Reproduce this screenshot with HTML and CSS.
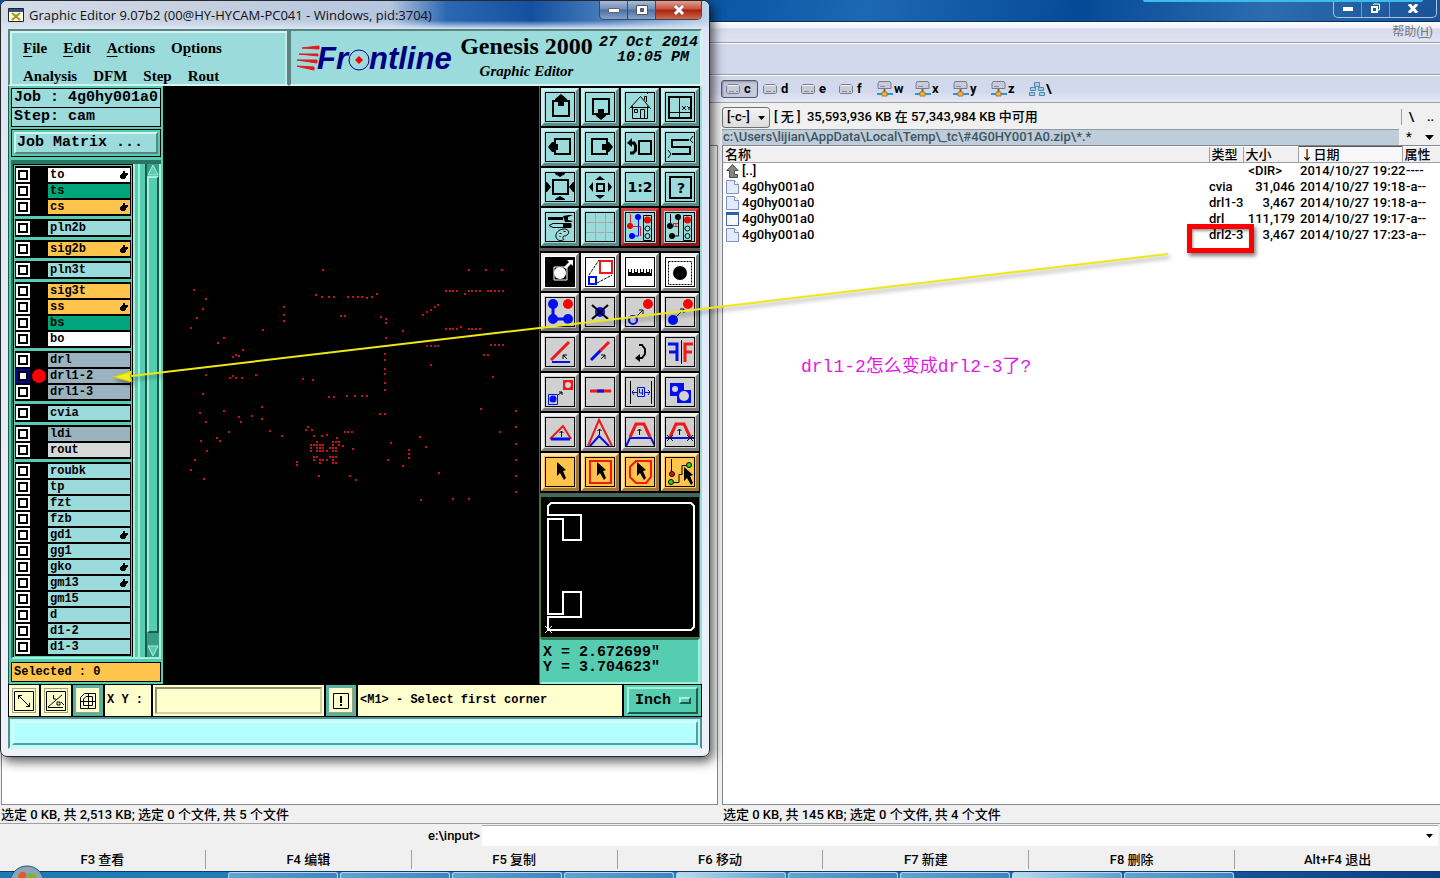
FILE: index.html
```html
<!DOCTYPE html>
<html lang="zh-CN">
<head>
  <meta charset="UTF-8" />
  <title>Graphic Editor</title>
  <link rel="stylesheet" href="styles.css">
</head>
<body>

  <!-- Shared icon shapes -->
  <svg class="defs" aria-hidden="true">
    <symbol id="hand" viewBox="0 0 9 8"><path d="M4 0h2v2h3v2H8v1H7v2H6v1H2V7H1V4h1V3h1V2h1z"/></symbol>
    <symbol id="cursor" viewBox="0 0 12 19"><path d="M1 0l9 8-3 1 3 7-2 2-4-7-3 3z"/></symbol>
    <symbol id="disk" viewBox="0 0 14 10"><path d="M2 .5h10l1.500 2v6l-1 1H1.500l-1-1v-6z" fill="#c9ccd6" stroke="#777c8c"/><path d="M1.500 1.500h11" stroke="#f5f6fa"/><path d="M3 7.500h5" stroke="#888c98"/><path d="M10 7.500h2" stroke="#3fae50"/></symbol>
    <symbol id="net" viewBox="0 0 16 16"><path d="M2 .5h11l1 2v5H1v-5z" fill="#c9ccd6" stroke="#777c8c"/><path d="M3 5.500h5" stroke="#888c98"/><path d="M7.500 8v4" stroke="#666" stroke-width="2"/><path d="M0 13h16" stroke="#2d94d8" stroke-width="2"/><path d="M5 11h5v4H5z" fill="#f0b840" stroke="#b47d18"/></symbol>
    <symbol id="page" viewBox="0 0 13 14"><path d="M.5.500h8l4 4v9H.5z" fill="#e4ebfc" stroke="#7f90c8"/><path d="M8.500.500v4h4" fill="#fff" stroke="#7f90c8"/></symbol>
  </svg>

  <!-- File manager -->
  <main class="commander">
    <header class="cmd-title">
      <div class="caption-buttons">
        <button aria-label="Minimize"><svg width="10" height="4"><path d="M0 0h10v4H0z" fill="#fff"/></svg></button>
        <button aria-label="Restore"><svg width="11" height="11"><path d="M3.500 2V1h6v6H8" fill="none" stroke="#fff"/><path d="M2 4h5v5H2z" fill="none" stroke="#fff" stroke-width="2"/></svg></button>
        <button class="wide" aria-label="Close"><svg width="10" height="9"><path d="M1 0l8 9M9 0L1 9" stroke="#fff" stroke-width="3"/></svg></button>
      </div>
    </header>
    <nav class="cmd-menu"><a href="#">帮助(<u>H</u>)</a></nav>
    <div class="cmd-toolbar"></div>
    <div class="drives">
      <button class="on"><svg width="14" height="10"><use href="#disk"/></svg>c</button>
      <button><svg width="14" height="10"><use href="#disk"/></svg>d</button>
      <button><svg width="14" height="10"><use href="#disk"/></svg>e</button>
      <button><svg width="14" height="10"><use href="#disk"/></svg>f</button>
      <button><svg width="16" height="16"><use href="#net"/></svg>w</button>
      <button><svg width="16" height="16"><use href="#net"/></svg>x</button>
      <button><svg width="16" height="16"><use href="#net"/></svg>y</button>
      <button><svg width="16" height="16"><use href="#net"/></svg>z</button>
      <button><svg width="16" height="16" fill="#a8d0ea" stroke="#5484a8"><path d="M5.500 1.500h5v4h-5zM1.500 6.500h5v3h-5zM9.500 6.500h5v3h-5zM.5 11.500h5v3h-5zM10.500 11.500h5v3h-5z"/></svg>\</button>
    </div>

    <div class="panels">
      <section class="panel">
        <div class="panel-head"></div>
        <div class="path"></div>
        <div class="filebox empty"></div>
        <p class="status">选定 0 KB, 共 2,513 KB; 选定 0 个文件, 共 5 个文件</p>
      </section>
      <section class="panel">
        <div class="panel-head">
          <div class="drive-select"><select aria-label="Drive"><option>[-c-]</option></select><svg width="7" height="4"><path d="M0 0h7L3.500 4z"/></svg></div>
          <span class="free">[ 无 ]&nbsp; 35,593,936 KB 在 57,343,984 KB 中可用</span>
          <span class="updir"><button>\</button><button>..</button></span>
        </div>
        <div class="path">
          <span>c:\Users\lijian\AppData\Local\Temp\_tc\#4G0HY001A0.zip\*.*</span>
          <div class="path-buttons"><button>*</button><button aria-label="History"><svg width="9" height="5"><path d="M0 0h9L4.500 5z"/></svg></button></div>
        </div>
        <div class="filebox">
          <table>
            <thead>
              <tr><th>名称</th><th class="type">类型</th><th class="size">大小</th><th class="date">↓日期</th><th class="attr">属性</th></tr>
            </thead>
            <tbody>
              <tr><td><svg width="13" height="14"><path d="M6.500.500L.8 6.500H3.500v7h8v-3h-3v-4h3.700z" fill="#858585" stroke="#4c4c4c"/></svg>[..]</td><td></td><td class="dir">&lt;DIR&gt;</td><td>2014/10/27 19:22</td><td>----</td></tr>
              <tr><td><svg width="13" height="14"><use href="#page"/></svg>4g0hy001a0</td><td>cvia</td><td>31,046</td><td>2014/10/27 19:18</td><td>-a--</td></tr>
              <tr><td><svg width="13" height="14"><use href="#page"/></svg>4g0hy001a0</td><td>drl1-3</td><td>3,467</td><td>2014/10/27 19:18</td><td>-a--</td></tr>
              <tr><td><svg width="13" height="14"><path d="M.5.500h12v13H.5z" fill="#f4f8ff" stroke="#4468b0"/><path d="M0 0h13v3H0z" fill="#345ca8"/></svg>4g0hy001a0</td><td>drl</td><td>111,179</td><td>2014/10/27 19:17</td><td>-a--</td></tr>
              <tr><td><svg width="13" height="14"><use href="#page"/></svg>4g0hy001a0</td><td class="marked">drl2-3</td><td>3,467</td><td>2014/10/27 17:23</td><td>-a--</td></tr>
            </tbody>
          </table>
        </div>
        <p class="status">选定 0 KB, 共 145 KB; 选定 0 个文件, 共 4 个文件</p>
      </section>
    </div>

    <div class="cmdline">
      <label for="cmd">e:\input&gt;</label>
      <div class="combo"><input id="cmd" type="text"><button aria-label="Commands"><svg width="7" height="4"><path d="M0 0h7L3.500 4z"/></svg></button></div>
    </div>
    <div class="fkeys">
      <button>F3 查看</button><button>F4 编辑</button><button>F5 复制</button><button>F6 移动</button><button>F7 新建</button><button>F8 删除</button><button>Alt+F4 退出</button>
    </div>
    <footer class="taskbar">
      <svg class="orb" width="38" height="13"><circle cx="19" cy="18" r="17" fill="#8aa5b8" stroke="#24527c"/><path d="M10 13c0-6 5-7 8-5v5z" fill="#e45a24"/><path d="M19 8c4 2 7 0 9 1v4h-9z" fill="#7fb42c"/></svg>
      <i></i><i></i><i></i><i></i><i class="lit"></i><i></i><i></i><i class="lit"></i><i></i>
    </footer>
  </main>
  <div class="notch"></div>

  <!-- Genesis window -->
  <section class="genesis">
    <header class="gen-title">
      <svg width="16" height="14"><path d="M.5.500h15v13H.5z" fill="#fffbe8" stroke="#222"/><path d="M1 1h14v3H1z" fill="#334d90"/><path d="M4 5l8 7M12 5l-8 7" stroke="#a09a10" stroke-width="2"/></svg>
      <h1>Graphic Editor 9.07b2 (00@HY-HYCAM-PC041 - Windows, pid:3704)</h1>
      <div class="caption-buttons">
        <button aria-label="Minimize"><svg width="12" height="5"><path d="M.5.500h11v4H.5z" fill="#fff" stroke="#666"/></svg></button>
        <button aria-label="Maximize"><svg width="12" height="10"><path d="M.5.500h11v9H.5z" fill="#fff" stroke="#555"/><path d="M4.500 3.500h3v3h-3z" fill="#4d668c" stroke="#555"/></svg></button>
        <button class="close" aria-label="Close"><svg width="12" height="10"><path d="M2 1l8 8M10 1L2 9" stroke="#555" stroke-width="4"/><path d="M2 1l8 8M10 1L2 9" stroke="#fff" stroke-width="3"/></svg></button>
      </div>
    </header>

    <div class="gen-body">
      <div class="banner">
        <nav class="gen-menu">
          <div><button><u>F</u>ile</button><button><u>E</u>dit</button><button><u>A</u>ctions</button><button>O<u>p</u>tions</button></div>
          <div><button>Analysis</button><button>DFM</button><button>Step</button><button>Rout</button></div>
        </nav>
        <div class="brand">
          <svg class="logo" width="162" height="34">
            <path d="M5 7l17-2v3zM2 13h19v2zM0 19h20v3zM-1 25l18 1v3z" fill="#e81818" stroke="#e81818"/>
            <g fill="#000080" font-family="Liberation Sans, sans-serif" font-weight="bold" font-style="italic" font-size="31"><text x="20" y="28">Fr</text><text x="72" y="28">ntline</text></g>
            <circle cx="62" cy="19" r="10" fill="none" stroke="#000080"/><path d="M62 15l4 4-4 4-4-4z" fill="#f00"/>
          </svg>
          <div class="product"><strong>Genesis 2000</strong><em>Graphic Editor</em></div>
          <time>27 Oct 2014<br>10:05 PM&nbsp;</time>
        </div>
      </div>

      <div class="work">
        <aside class="side">
          <div class="job"><p>Job : 4g0hy001a0</p><p>Step: cam</p></div>
          <div class="matrix"><button>Job Matrix ...</button></div>
          <div class="scroller">
            <div class="layers">
              <div class="group">
                <label class="white"><input type="checkbox"><i></i><span>to<svg><use href="#hand"/></svg></span></label>
                <label class="green"><input type="checkbox"><i></i><span>ts</span></label>
                <label class="amber"><input type="checkbox"><i></i><span>cs<svg><use href="#hand"/></svg></span></label>
              </div>
              <div class="group"><label><input type="checkbox"><i></i><span>pln2b</span></label></div>
              <div class="group"><label class="amber"><input type="checkbox"><i></i><span>sig2b<svg><use href="#hand"/></svg></span></label></div>
              <div class="group"><label><input type="checkbox"><i></i><span>pln3t</span></label></div>
              <div class="group">
                <label class="amber"><input type="checkbox"><i></i><span>sig3t</span></label>
                <label class="amber"><input type="checkbox"><i></i><span>ss<svg><use href="#hand"/></svg></span></label>
                <label class="green"><input type="checkbox"><i></i><span>bs</span></label>
                <label class="white"><input type="checkbox"><i></i><span>bo</span></label>
              </div>
              <div class="group">
                <label class="grey"><input type="checkbox"><i></i><span>drl</span></label>
                <label class="grey"><input type="checkbox" checked><i></i><span>drl1-2</span></label>
                <label class="grey"><input type="checkbox"><i></i><span>drl1-3</span></label>
              </div>
              <div class="group"><label><input type="checkbox"><i></i><span>cvia</span></label></div>
              <div class="group">
                <label class="grey"><input type="checkbox"><i></i><span>ldi</span></label>
                <label class="silver"><input type="checkbox"><i></i><span>rout</span></label>
              </div>
              <div class="group">
                <label><input type="checkbox"><i></i><span>roubk</span></label>
                <label><input type="checkbox"><i></i><span>tp</span></label>
                <label><input type="checkbox"><i></i><span>fzt</span></label>
                <label><input type="checkbox"><i></i><span>fzb</span></label>
                <label><input type="checkbox"><i></i><span>gd1<svg><use href="#hand"/></svg></span></label>
                <label><input type="checkbox"><i></i><span>gg1</span></label>
                <label><input type="checkbox"><i></i><span>gko<svg><use href="#hand"/></svg></span></label>
                <label><input type="checkbox"><i></i><span>gm13<svg><use href="#hand"/></svg></span></label>
                <label><input type="checkbox"><i></i><span>gm15</span></label>
                <label><input type="checkbox"><i></i><span>d</span></label>
                <label><input type="checkbox"><i></i><span>d1-2</span></label>
                <label><input type="checkbox"><i></i><span>d1-3</span></label>
              </div>
            </div>
            <div class="rail"></div>
            <div class="scrollbar">
              <button aria-label="Scroll up"><svg width="12" height="12"><path d="M6 1l5 10H1z" fill="#56cdb0" stroke="#a4f0dc"/></svg></button>
              <div class="thumb"></div>
              <button aria-label="Scroll down"><svg width="12" height="12"><path d="M1 1h10L6 11z" fill="#56cdb0" stroke="#a4f0dc"/></svg></button>
            </div>
          </div>
          <p class="selected">Selected : 0</p>
        </aside>

        <!-- Drill hits of the active layer -->
        <div class="canvas">
          <svg width="376" height="500" viewBox="0 0 376 500">
            <path stroke="#c4141e" stroke-width="2" d="M159 184h2M305 184h2M322 184h2M338 184h2M30 204h2M42 213h2M39 223h2M33 232h2M27 242h2
              M152 209h2M158 211h2M165 211h2M170 211h2M184 211h2M189 211h2M194 211h2M198 211h2M203 212h2M208 211h2M213 208h2
              M282 205h2M286 205h2M289 205h2M293 205h2M301 208h2M305 205h2M308 205h2M312 205h2M316 205h2M324 205h2M327 205h2M331 205h2M335 205h2M339 205h2
              M120 221h2M120 229h2M120 235h2M177 230h2M181 230h2M217 231h2M222 233h2M222 237h2M259 229h2M263 226h2M267 224h2M271 221h2M274 219h2
              M99 244h2M239 245h2M282 243h2M286 243h2M289 243h2M293 243h2M297 241h2M305 243h2M308 243h2M312 243h2M316 243h2
              M60 252h2M54 257h2M222 252h2M79 264h2M69 271h2M72 269h2M75 270h2M263 260h2M267 260h2M271 260h2M274 260h2
              M327 259h2M331 259h2M335 259h2M339 259h2M320 269h2M324 269h2M267 279h2M329 291h2
              M221 268h2M221 274h2M221 283h2M221 288h2M221 297h2M221 304h2
              M42 289h2M66 292h2M69 290h2M72 292h2M78 292h2M92 289h2M139 293h2M149 294h2M39 308h2M165 311h2M170 311h2M183 310h2M191 310h2M198 310h2M203 310h2
              M98 321h2M60 325h2M36 327h2M75 331h2M88 330h2M98 333h2M42 336h2M77 336h2M216 328h2M221 328h2
              M317 323h2M352 325h2M352 341h2M352 358h2M352 374h2M352 390h2M352 406h2M336 346h2
              M65 346h2M53 352h2M37 355h2M56 355h2M43 365h2M31 374h2M27 384h2M40 393h2M106 345h2M118 350h2
              M144 341h2M142 344h2M148 344h2M150 350h2M158 350h2M163 349h2M173 352h2M181 346h2M184 346h2M188 346h2
              M153 356h2M169 356h2M172 356h2M175 356h2M147 359h2M150 359h2M153 359h2M156 359h2M159 359h2M169 359h2M175 359h2M179 360h2
              M147 362h2M153 362h2M156 362h2M159 362h2M166 362h2M169 362h2M172 362h2M147 365h2M153 365h2M156 365h2M159 365h2M163 365h2M169 365h2M172 365h2M189 363h2
              M150 371h2M153 371h2M166 371h2M169 371h2M172 371h2M150 374h2M156 374h2M159 374h2M163 374h2M169 374h2M156 377h2M169 377h2M172 377h2
              M133 376h2M133 379h2M155 390h2M186 390h2M192 394h2M227 357h2M256 351h2M262 361h2M245 364h2M245 368h2M245 372h2M224 374h2M239 380h2M275 387h2
              M257 414h2M289 413h2M305 413h2"/>
          </svg>
        </div>

        <aside class="tools">
          <div class="grid">
            <button aria-label="Pan up"><svg><path class="l2" d="M8 9h16v15H8z"/><path d="M16 2l6 5v2h-3v5h-6V9h-3V7z"/></svg></button>
            <button aria-label="Pan down"><svg><path class="l2" d="M8 7h16v15H8z"/><path d="M16 28l-5-4v-2h2v-5h6v5h2v2z"/></svg></button>
            <button aria-label="Home"><svg><path class="l1" d="M4.500 16.500l11-12 10 12M7.500 14v12.500h15V14M9.500 17.500h3v3h-3zM15.500 26V17.500h4V26M19.500 8V4.500h2V10M22 2l1-1M5 15.500h20"/></svg></button>
            <button aria-label="Zoom window"><svg><path class="l2" d="M4 5h22v21H4z"/><path class="l1" d="M14.500 5v21M5 20.500h21"/><path class="l1" d="M17 14l4 4m0-4l-4 4M22 14l2 2v2m2-4l-2 2"/></svg></button>
            <button aria-label="Pan left"><svg><path class="l2" d="M10 7h15v15H10z"/><path d="M3 15l4-5h2v2h4v6H9v2H7z"/></svg></button>
            <button aria-label="Pan right"><svg><path class="l2" d="M7 7h15v15H7z"/><path d="M28 15l-4-5h-2v2h-5v6h5v2h2z"/></svg></button>
            <button aria-label="Previous view"><svg><path class="l2" d="M14 9h12v13H14z"/><path d="M5 11h4l1.500 2.500v5L8 21H5" fill="none" stroke="#000" stroke-width="3"/><path d="M2 11l5-5v9z"/></svg></button>
            <button aria-label="Serpentine"><svg><path class="l2" d="M24 8H7v7h18v7H7"/><path class="l1" d="M28 4l-3 4 3 3M3 18l3 4-3 4"/></svg></button>
            <button aria-label="Zoom out"><svg><path class="l2" d="M8 8h15v14H8z"/><path d="M15 5l-5-3V1h10v1zM15 24l-5 3v1h10v-1zM1 10h1l4 5-4 5H1zM29 10h-1l-4 5 4 5h1z"/></svg></button>
            <button aria-label="Zoom in"><svg><path class="l2" d="M12 12h7v7h-7z"/><path d="M15 4l5 4H10zM15 27l5-4H10zM4 15l4-5v10zM27 15l-4-5v10z"/></svg></button>
            <button aria-label="Scale 1:2"><svg><text x="15" y="20">1:2</text></svg></button>
            <button aria-label="Help"><svg><path class="l2" d="M5 5h21v21H5z"/><text x="16" y="21">?</text></svg></button>
            <button aria-label="Setup"><svg><path d="M3 5h15v3H3zM18 4l6-1h4l-5 2v3l5 1-2 1h-6z"/><path class="l1" d="M4 13.500l4-2h18v4H8z"/><path d="M18 11h8v4h-8z"/><path class="l1" d="M11 25c-1-4 3-8 8-8s6 4 3 6-3 0-4 2 2 2 0 3-6 1-7-3zM14.500 21.500h2M18.500 19.500h2M14.500 24.500h1"/></svg></button>
            <button aria-label="Grid"><svg><path d="M10.500 1v28M20.500 1v28M1 10.500h28M1 20.500h28" stroke="#b0a4a4"/></svg></button>
            <button class="red" aria-label="Net compare"><svg><path class="l1" d="M18.500 3.500h8v25h-8z"/><circle cx="22.500" cy="8" r="3.500" fill="#e00"/><circle class="l1" cx="22.500" cy="16.500" r="2.500"/><circle class="l1" cx="22.500" cy="24" r="2.500"/><path d="M5.500 2v12.500H15.500V24" fill="none" stroke="#e02020"/><path d="M13.500 5v19H7" fill="none" stroke="#00f"/><circle cx="5" cy="14" r="3" fill="#e00"/><g fill="#00f"><circle cx="13" cy="5" r="3"/><circle cx="7" cy="24" r="3"/></g></svg></button>
            <button class="red" aria-label="Net check"><svg><path class="l1" d="M18.500 3.500h8v25h-8zM5.500 2v12M13.500 5v19H7"/><circle cx="22.500" cy="8" r="3.500" fill="#e00"/><circle class="l1" cx="22.500" cy="16.500" r="2.500"/><circle class="l1" cx="22.500" cy="24" r="2.500"/><path d="M8 11.500h5M8 14.500h5M8.500 11v4M11 11v4" stroke="#d22"/><circle cx="5" cy="14" r="3"/><circle cx="13" cy="5" r="3"/><circle cx="7" cy="24" r="3"/></svg></button>
          </div>
          <div class="grid edit">
            <button class="paper" aria-label="Pad"><svg><path d="M0 0h30v30H0z"/><path d="M9 10h13v13H9z" fill="none" stroke="#fff"/><circle cx="15" cy="16" r="6" fill="#fff"/><path d="M19 10l5-5-2-2h6v6l-2-2-5 5z" fill="#fff"/></svg></button>
            <button class="paper" aria-label="Copy"><svg><path class="l1" d="M4 18L14 3M12 26l15-8" stroke-dasharray="3 1"/><path class="r" d="M15 4h12v12H15z"/><path class="b" d="M4 20h7v7H4z"/></svg></button>
            <button class="paper" aria-label="Measure"><svg><path d="M3 12h1v3h2v-3h1v4h2v-4h1v3h2v-3h1v4h2v-4h1v3h2v-3h1v4h2v-4h1v3h2v-3h1v4h1v-4h1v7H3z"/></svg></button>
            <button class="paper" aria-label="Select pad"><svg><path class="l1" d="M3.500 4.500h23v23h-23z" stroke-dasharray="2 1"/><circle cx="15" cy="16" r="7"/></svg></button>
            <button aria-label="Add"><svg><path d="M8 7v15h15" fill="none" stroke="#0010f0" stroke-width="3"/><g fill="#0010f0"><circle cx="8" cy="7" r="5"/><circle cx="8" cy="22" r="5"/><circle cx="23" cy="22" r="5"/></g><circle cx="23" cy="7" r="5" fill="#f00"/></svg></button>
            <button aria-label="Delete"><svg><circle cx="15" cy="15" r="5" fill="#0010f0"/><path class="l2" d="M7 8l16 14M23 8L7 22"/></svg></button>
            <button aria-label="Move"><svg><circle class="b" cx="8" cy="23" r="4"/><circle cx="23" cy="7" r="5" fill="#f00"/><path class="l1" d="M12 19l6-6m-4 0h4v4"/></svg></button>
            <button aria-label="Duplicate"><svg><path class="l1" d="M8 23L19 12m-4 0h4v4"/><circle cx="8" cy="23" r="5" fill="#0010f0"/><circle cx="23" cy="7" r="5" fill="#f00"/></svg></button>
            <button aria-label="Angle"><svg><path class="r w3" d="M6 23L24 5"/><path class="b" d="M7 25h18"/><path class="l1" d="M22 22l-4-4m0 4v-4h4"/></svg></button>
            <button aria-label="Extend"><svg><path class="b w3" d="M6 23l10-10"/><path class="r w3" d="M15 14l9-9"/><path class="l1" d="M16 22l4-4m-4 0h4v4"/></svg></button>
            <button aria-label="Rotate"><svg><path class="l2" d="M14 8h3l3 4v5l-3 4h-6"/><path d="M10 21l5-4v8z"/></svg></button>
            <button aria-label="Mirror"><svg><path class="b w3" d="M3 7h9v17M4 15h8"/><path class="r w3" d="M20 25V7h8M20 15h7"/><path class="l1" d="M16.500 3v24"/></svg></button>
            <button aria-label="Replace"><svg><path class="b1" d="M3.500 17.500h9v10h-9z"/><circle cx="8" cy="22" r="3.500" fill="#0010f0"/><path d="M18 3h10v10H18z" fill="#f01818"/><circle cx="23" cy="8" r="3" fill="#d3d3d3"/><path class="l1" d="M13 18l4-3m-3 0h3v3"/></svg></button>
            <button aria-label="Join"><svg><path class="r w3" d="M5 14h21"/><path class="b w3" d="M12 14h7"/></svg></button>
            <button aria-label="Spacing"><svg><path class="l1" d="M5.500 4v23M26.500 4v23"/><path class="b1" d="M7 15.500h5M20 15.500h5M9 13l-2 2 2 3M23 13l2 2-2 3M12.500 10.500h7v9h-7zM14.500 12v4h3m0-4v6"/></svg></button>
            <button aria-label="Surface"><svg><path d="M5 6h14v7h7v13H12v-7H5z" fill="#0010f0"/><circle cx="10" cy="12" r="3" fill="#d3d3d3"/><circle cx="19" cy="19" r="5" fill="#d3d3d3"/></svg></button>
            <button aria-label="Triangle"><svg><path class="r" d="M5 22L18 9l8 13"/><path class="b w3" d="M6 22h19"/><path class="l1" d="M16.500 20v-6m-2 2l2-2 2 2"/></svg></button>
            <button aria-label="Chevron"><svg><path class="r" d="M3 29L14 3l13 26"/><path class="b" d="M5 29l9-10 10 10"/><path class="l1" d="M14.500 18v-6m-2 2l2-2 2 2"/></svg></button>
            <button aria-label="Taper"><svg><path class="b" d="M1 29l4-8h21l4 8"/><path class="r w3" d="M5 20l6-13h8l6 13"/><path class="l1" d="M14.500 18v-6m-2 2l2-2 2 2"/></svg></button>
            <button aria-label="Trim"><svg><path class="r w3" d="M5 20l6-13h8l6 13"/><path class="b" d="M1 21h28"/><path class="l1" d="M14.500 18v-6m-2 2l2-2 2 2M2 18l6 6m0-6l-6 6M22 18l6 6m0-6l-6 6"/></svg></button>
            <button class="sel" aria-label="Select"><svg><use href="#cursor" x="11" y="5" width="12" height="19"/></svg></button>
            <button class="sel" aria-label="Select in frame"><svg><path class="r" d="M5 4h21v22H5z"/><use href="#cursor" x="11" y="5" width="12" height="19"/></svg></button>
            <button class="sel" aria-label="Select in polygon"><svg><path class="r" d="M11 4h15v16l-5 6H11l-6-6V10z"/><use href="#cursor" x="11" y="5" width="12" height="19"/></svg></button>
            <button class="sel" aria-label="Select net"><svg><path class="l1" d="M6.500 2v14M6 25.500h8v-8h3v-9h9"/><circle cx="7" cy="17" r="2.500" fill="#d11" stroke="#000"/><g fill="#2d2" stroke="#000"><circle cx="6" cy="25" r="2.500"/><circle cx="24" cy="8" r="2.500"/></g><use href="#cursor" x="18" y="10" width="12" height="19"/></svg></button>
          </div>
          <div class="minimap">
            <svg width="160" height="138" viewBox="0 0 160 138"><path d="M7 16V9l3-3h140l3 3v121l-3 3H7v-13h33V95H22v22H7V22h15v21h18V18H7z" fill="none" stroke="#fff" stroke-width="2"/><path d="M4 129l7 7m0-7l-7 7" stroke="#fff"/></svg>
          </div>
          <p class="coords">X = 2.672699"<br>Y = 3.704623"</p>
        </aside>
      </div>

      <div class="entry">
        <button class="sq" aria-label="Snap"><svg width="20" height="20"><path class="l1" d="M.5.500h19v19H.5zM4.500 8V4.500H8M4.500 4.500l11 11M12 15.500h3.500V12"/></svg></button>
        <button class="sq" aria-label="Angle input"><svg width="20" height="20"><path class="l1" d="M.5.500h19v19H.5zM2 16.500h15M2 16L16 4M7.500 4v4H10M11 11h3v3h-3zM15 11l3 3"/></svg></button>
        <button class="sq on" aria-label="Grid snap"><svg width="16" height="16"><path class="l1" d="M.5 4.500l4-4h11v15H.5zM8.500 1v14M1 8.500h14"/><path class="l1" d="M3.500 6v6.500h9v-9H6z"/></svg></button>
        <label for="xy">X Y :</label>
        <div class="field"><input id="xy" type="text"></div>
        <button class="sq on" aria-label="Warnings"><svg width="16" height="16"><path class="l1" d="M.5.500h15v15H.5z"/><path d="M7 3h2v7H7zM7 11h2v2H7z"/></svg></button>
        <p>&lt;M1&gt; - Select first corner</p>
        <div class="units"><button>Inch<i></i></button></div>
      </div>
      <div class="message"><div></div></div>
    </div>
  </section>

  <!-- Notes drawn over both windows -->
  <svg class="arrow" width="1200" height="400">
    <path d="M1168 254L131 376" stroke="#eee818" stroke-width="2"/>
    <path d="M113 377l19-6-2 5 2 6z" fill="#f2ee1c" stroke="#d0c810"/>
  </svg>
  <p class="note">drl1-2怎么变成drl2-3了?</p>

</body>
</html>
```
FILE: styles.css
```css
* {
  box-sizing: border-box;
}

body {
  margin: 0;
  height: 100vh;
  overflow: hidden;
  position: relative;
  font: 500 13px/16px Roboto, "Noto Sans CJK SC", sans-serif;
  color: #000;
}

button, input, select {
  font: inherit;
  color: inherit;
  margin: 0;
  padding: 0;
  border: 0;
  background: none;
  border-radius: 0;
}

p, h1 {
  margin: 0;
}

svg {
  display: block;
  flex: none;
}

.defs {
  position: absolute;
  width: 0;
  height: 0;
}

/* File manager */
.commander {
  height: 100%;
  display: flex;
  flex-direction: column;
  background: #f0f0f0;
}

.cmd-title {
  height: 22px;
  display: flex;
  justify-content: flex-end;
  padding-right: 3px;
  background: linear-gradient(100deg, #0b56a5 50%, #1d68b4 60%, #064a97 75%, #2d6cae 88%, #1a5296);
  border-bottom: 1px solid #082f5c;
}

.caption-buttons {
  display: flex;
  align-items: stretch;
}

.caption-buttons button {
  display: flex;
  align-items: center;
  justify-content: center;
}

.cmd-title .caption-buttons {
  height: 18px;
  border: 1px solid #a8c4e4;
  border-top: 0;
  border-radius: 0 0 5px 5px;
}

.cmd-title .caption-buttons button {
  width: 28px;
  border-right: 1px solid #6f97c8;
}

.cmd-title .caption-buttons .wide {
  width: 46px;
  border: 0;
}

.cmd-menu {
  height: 21px;
  padding: 2px 7px;
  text-align: right;
  border-bottom: 1px solid #a0a0a0;
  background: linear-gradient(#fff, #eef0f9 30%, #d5daee 35%, #e0e4f4);
}

.cmd-menu a {
  font-weight: 400;
  font-size: 12px;
  color: #777;
  text-decoration: none;
}

.cmd-toolbar {
  height: 32px;
  border-top: 1px solid #fff;
  border-bottom: 1px solid #a0a0a0;
  background: #d3d9ed;
}

.drives {
  height: 28px;
  display: flex;
  padding: 4px 0 4px 50%;
  border-top: 1px solid #fff;
  border-bottom: 1px solid #a0a0a0;
  background: linear-gradient(#d3d9ed 60%, #e6e9f5);
}

.drives button {
  width: 38px;
  display: flex;
  align-items: center;
  gap: 4px;
  padding: 0 4px;
  font-weight: 700;
}

.drives button:nth-child(n+5) {
  gap: 1px;
}

.drives .on {
  width: 37px;
  margin: 0 1px 0 1px;
  border: 1px solid #555a68;
  border-radius: 3px;
  background: #c4c9dc;
  box-shadow: inset 1px 1px 2px #8a8fa4;
}

.panels {
  flex: 1;
  display: flex;
  gap: 4px;
  min-height: 0;
}

.panel {
  flex: 1;
  display: flex;
  flex-direction: column;
  min-width: 0;
}

.panel-head {
  height: 26px;
  display: flex;
  align-items: center;
  gap: 4px;
  padding-top: 2px;
}

.drive-select {
  position: relative;
}

.drive-select select {
  appearance: none;
  display: block;
  width: 48px;
  height: 21px;
  padding-left: 4px;
  border: 1px solid #707070;
  border-radius: 3px;
  background: linear-gradient(#f4f4f4, #dcdcdc);
}

.drive-select svg {
  position: absolute;
  right: 5px;
  top: 9px;
  pointer-events: none;
}

.free {
  flex: 1;
}

.updir {
  display: flex;
  border-left: 1px solid #a0a0a0;
}

.updir button {
  width: 19px;
}

.path {
  height: 16px;
  display: flex;
  color: #3f5560;
}

.path span {
  flex: 1;
  padding-left: 1px;
  border-top: 1px solid #909ca4;
  background: #bfcddb;
  line-height: 14px;
}

.path-buttons {
  display: flex;
  width: 41px;
  color: #000;
}

.path-buttons button {
  width: 20px;
  display: flex;
  align-items: center;
  justify-content: center;
}

.filebox {
  flex: 1;
  background: #fff;
  border: 1px solid #828790;
  border-right: 0;
}

.filebox.empty {
  margin-left: 1px;
  border-right: 1px solid #828790;
}

table {
  width: 100%;
  border-collapse: collapse;
  table-layout: fixed;
}

th, td {
  height: 16px;
  padding: 0;
  font-weight: 500;
  text-align: left;
  line-height: 16px;
  white-space: nowrap;
}

th {
  padding-left: 2px;
  background: #f0f0f0;
  border-right: 1px solid #a0a0a0;
  border-bottom: 1px solid #a0a0a0;
  line-height: 15px;
}

th.attr {
  border-right: 0;
}

th.date {
  background: #f8f8f8;
  border-top: 1px solid #555;
  border-left: 1px solid #555;
}

.type { width: 34px; }
.size { width: 55px; }
.date { width: 104px; }
.attr { width: 38px; }

td:first-child {
  display: flex;
  align-items: center;
  gap: 3px;
  padding-left: 3px;
}

td:nth-child(3) {
  text-align: right;
  padding-right: 3px;
}

td.dir {
  padding-right: 16px;
}

td:nth-child(4) {
  padding-left: 2px;
}

td:nth-child(5) {
  padding-left: 4px;
}

td.marked {
  position: relative;
}

td.marked::after {
  content: "";
  position: absolute;
  inset: -3px -11px -10px -22px;
  border: 5px solid #f00;
  box-shadow: 2px 3px 4px rgba(0,0,0,0.5), inset 1px 2px 3px rgba(0,0,0,0.4);
}

.status {
  height: 18px;
  padding: 2px 1px 0;
}

.cmdline {
  height: 24px;
  display: grid;
  grid-template-columns: 1fr 2fr;
  align-items: center;
  border-top: 1px solid #a0a0a0;
}

.cmdline label {
  text-align: right;
}

.combo {
  height: 21px;
  margin: 0 2px;
  display: flex;
  background: #fff;
  border-top: 1px solid #aaa;
}

.combo input {
  flex: 1;
}

.combo button {
  width: 16px;
  padding-left: 4px;
}

.fkeys {
  height: 24px;
  display: flex;
  padding: 3px 0 2px;
}

.fkeys button {
  flex: 1;
  border-right: 1px solid #a0a0a0;
}

.fkeys button:last-child {
  border: 0;
}

/* Taskbar */
.taskbar {
  height: 7px;
  position: relative;
  display: flex;
  gap: 2px;
  padding-left: 228px;
  padding-right: 206px;
  border-top: 1px solid #123a66;
  background: linear-gradient(90deg, #1a7ab4, #2583bc 40%, #1a62a4 75%, #0c3f86);
}

.taskbar i {
  flex: 1;
  border: 1px solid #b4d6ee;
  border-bottom: 0;
  border-radius: 3px 3px 0 0;
  background: linear-gradient(90deg, #5fa4d0, #3d86c0);
}

.taskbar .lit {
  background: linear-gradient(90deg, #b9dcee, #5b9fd0);
}

.orb {
  position: absolute;
  left: 8px;
  bottom: 0;
}

.notch {
  position: absolute;
  top: 0;
  right: 17px;
  width: 280px;
  height: 2px;
  background: #39bdea;
  border-radius: 0 0 4px 4px;
}

/* Genesis window frame */
.genesis {
  position: absolute;
  left: 0;
  top: 0;
  width: 710px;
  padding: 0 7px 7px 7px;
  border: 1px solid #26282c;
  border-radius: 7px;
  background: linear-gradient(#dce6f4, #edf2f9);
  box-shadow: 3px 4px 12px rgba(0,0,0,0.7);
  font: bold 12px/16px "Liberation Mono", monospace;
}

.gen-title {
  height: 28px;
  margin: 0 -7px;
  display: flex;
  align-items: center;
  gap: 5px;
  padding: 0 7px;
  border-radius: 6px 6px 0 0;
  background: linear-gradient(transparent 70%, #dce6f4), linear-gradient(90deg, #d4dce8, #c4cfe0 30%, #b4c6e0 55%, #2b68b2 63%, #1450a0 75%, #4c80be 86%, #c3d4ea);
}

.gen-title h1 {
  flex: 1;
  font: 400 13px/16px "Open Sans", sans-serif;
  color: #111;
}

.gen-title .caption-buttons {
  align-self: flex-start;
  height: 19px;
  border: 1px solid #3c4a60;
  border-top: 0;
  border-radius: 0 0 5px 5px;
  background: linear-gradient(#a8bcd8, #6f8eb8 45%, #4a6e9e 50%, #83a3cc);
}

.gen-title .caption-buttons button {
  width: 28px;
  border-right: 1px solid #3c4a60;
}

.gen-title .caption-buttons .close {
  width: 45px;
  border: 0;
  border-radius: 0 0 4px 0;
  background: linear-gradient(#e0a090, #c8503c 45%, #a82010 50%, #d06848);
}

.gen-body {
  background: #000;
}

/* Menu and brand */
.banner {
  display: flex;
  height: 57px;
}

.gen-menu {
  width: 281px;
  padding: 6px 13px 0;
  border: 2px solid #5a8480;
  border-bottom-color: #d4f4f4;
  background: #9bdbdb;
  box-shadow: inset 2px 2px #d4f4f4, inset -2px 0 #c0eaea;
  font: bold 15px/17px "Liberation Serif", serif;
}

.gen-menu div {
  display: flex;
  gap: 16px;
  height: 28px;
}

.gen-menu button {
  height: 22px;
}

.gen-menu u {
  text-underline-offset: 3px;
}

.brand {
  flex: 1;
  display: flex;
  padding: 2px 2px;
  background: #9bdbdb;
  border: 2px solid #5a8480;
  border-bottom-color: #d4f4f4;
  border-right-color: #d4f4f4;
}

.logo {
  margin: 8px 0 0 4px;
}

.product {
  flex: 1;
  display: flex;
  flex-direction: column;
  align-items: center;
  padding-right: 5px;
  font-family: "Liberation Serif", serif;
  white-space: nowrap;
}

.product strong {
  font-size: 24px;
  line-height: 27px;
}

.product em {
  font-size: 15px;
  line-height: 22px;
}

.brand time {
  padding-top: 2px;
  font-size: 15px;
  font-style: italic;
  line-height: 15px;
  text-align: right;
}

/* Work area */
.work {
  display: flex;
}

.side {
  width: 155px;
  padding: 2px;
  display: flex;
  flex-direction: column;
  background: #56cdb0;
  border-left: 1px solid #1d5c4c;
  font-size: 15px;
}

.job {
  border: 1px solid #000;
  background: #9bdbdb;
}

.job p {
  height: 18px;
  padding: 0 2px;
  line-height: 17px;
  white-space: nowrap;
}

.job p + p {
  height: 19px;
  border-top: 1px solid #000;
}

.matrix {
  margin-top: 2px;
  padding: 2px;
  border: 1px solid #000;
}

.matrix button {
  width: 100%;
  height: 22px;
  padding-left: 1px;
  text-align: left;
  background: #9bdbdb;
  border: 2px solid;
  border-color: #d4f4f4 #5a8480 #5a8480 #d4f4f4;
}

.scroller {
  display: flex;
  margin-top: 3px;
  border-top: 4px solid #2a7462;
  border-left: 2px solid #2a7462;
  border-bottom: 2px solid #a4f0dc;
  font-size: 12px;
}

.layers {
  width: 120px;
  display: flex;
  flex-direction: column;
  gap: 3px;
  padding: 1px;
  border: 1px solid #000;
  border-bottom: 0;
}

.group {
  padding: 1px;
  background: #000;
}

.group label {
  height: 16px;
  display: flex;
  align-items: center;
}

.group input {
  appearance: none;
  width: 14px;
  height: 14px;
  border: 2px solid #fff;
  background: #fff;
  box-shadow: inset 0 0 0 2px #000;
}

.group input:checked {
  border-color: #0000a0;
}

.group i {
  width: 14px;
  height: 14px;
  margin: 0 2px;
  border-radius: 50%;
}

.group input:checked + i {
  background: #f00;
}

.group label span {
  flex: 1;
  height: 14px;
  display: flex;
  align-items: center;
  justify-content: space-between;
  padding: 0 2px;
  line-height: 14px;
  background: #9bdbdb;
}

.group span svg {
  width: 9px;
  height: 8px;
}

.group .white span { background: #fff; }
.group .green span { background: #00a57c; }
.group .amber span { background: #ffc44c; }
.group .grey span { background: #9bb3be; }
.group .silver span { background: #d8d8d8; }

.rail {
  flex: 1;
  border-left: 2px solid #a4f0dc;
  box-shadow: inset 3px 0 #56cdb0, inset 5px 0 #a4f0dc;
}

.scrollbar {
  width: 16px;
  display: flex;
  flex-direction: column;
  border-left: 2px solid #1d5c4c;
  border-right: 2px solid #a4f0dc;
  background: #3a9c84;
}

.scrollbar .thumb {
  flex: 1;
  margin-bottom: 12px;
  border: 2px solid;
  border-color: #a4f0dc #1d5c4c #1d5c4c #a4f0dc;
  background: #56cdb0;
}

.selected {
  margin-top: 3px;
  height: 20px;
  padding: 0 2px;
  font-size: 12px;
  line-height: 18px;
  border: 1px solid #000;
  background: #ffc44c;
}

.canvas {
  flex: 1;
  overflow: hidden;
}

/* Tool palette */
.tools {
  width: 163px;
  display: flex;
  flex-direction: column;
  border-left: 1px solid #2a7462;
  border-right: 2px solid #9bdbdb;
}

.grid {
  display: grid;
  grid-template-columns: repeat(4, 38px);
  gap: 2px;
  padding: 2px 0 2px 1px;
}

.grid button {
  height: 38px;
  padding: 1px;
  background: #9bdbdb;
  border: 3px solid;
  border-color: #c8eeee #5a8c8c #5a8c8c #c8eeee;
}

.grid svg {
  width: 30px;
  height: 30px;
  outline: 1px solid #000;
  outline-offset: -1px;
}

.grid text {
  font: bold 14px "DejaVu Sans", sans-serif;
  text-anchor: middle;
}

.grid .red {
  border-color: #e04040 #8c1818 #8c1818 #e04040;
}

.edit {
  border-top: 3px solid #5a5a5a;
  padding-top: 2px;
  border-bottom: 2px solid #5a5a5a;
}

.edit button {
  background: #d0d0d0;
  border-color: #f0f0f0 #808080 #808080 #f0f0f0;
}

.edit .paper {
  background: #fff;
}

.edit .sel {
  background: #ffc44c;
  border-color: #ffe4a4 #a07830 #a07830 #ffe4a4;
}

.l1, .l2, .r, .b, .b1 {
  fill: none;
  stroke: #000;
}

.l2, .r, .b {
  stroke-width: 2;
}

.r { stroke: #f01818; }
.b, .b1 { stroke: #0010e8; }
.w3 { stroke-width: 3; }

.minimap {
  border: 1px solid #4c7a20;
  border-top: 2px solid #2a7462;
  height: 143px;
}

.coords {
  flex: 1;
  padding: 5px 1px;
  font-size: 15px;
  line-height: 15px;
  background: #56cdb0;
  border: 2px solid;
  border-color: #2a7462 #a4f0dc #a4f0dc #56cdb0;
}

/* Coordinate entry */
.entry {
  display: flex;
  gap: 2px;
  padding: 1px;
  height: 33px;
}

.entry .sq {
  width: 30px;
  height: 31px;
  display: flex;
  align-items: center;
  justify-content: center;
  background: #ffffce;
  box-shadow: inset 0 0 0 3px #ffffce, inset 0 0 0 4px #a0a080;
}

.entry .on {
  box-shadow: inset 0 0 0 3px #56b49c, inset -4px -4px #a0a080;
}

.entry label, .entry p {
  background: #ffffce;
  line-height: 31px;
  padding: 0 2px;
}

.entry label {
  width: 46px;
  white-space: nowrap;
}

.entry p {
  flex: 1;
}

.field {
  width: 171px;
  padding: 2px;
  background: #ffffce;
}

.field input {
  width: 100%;
  height: 27px;
  background: #ffffce;
  border: 2px solid;
  border-color: #909070 #d0d0a4 #d0d0a4 #909070;
}

.units {
  width: 77px;
  padding: 2px 3px;
  background: #56cdb0;
}

.units button {
  width: 100%;
  height: 27px;
  display: flex;
  align-items: center;
  gap: 8px;
  padding-left: 6px;
  font-size: 15px;
  border: 2px solid;
  border-color: #a4f0dc #1d5c4c #1d5c4c #a4f0dc;
}

.units i {
  width: 12px;
  height: 7px;
  border: 2px solid;
  border-color: #a4f0dc #1d5c4c #1d5c4c #a4f0dc;
}

.message {
  height: 32px;
  padding: 2px;
  background: #b4ffff;
  border: 2px solid #5a8c8c;
  border-bottom-color: #d4f4f4;
}

.message div {
  height: 24px;
  border: 2px solid;
  border-color: #d8ffff #5a9c9c #5a9c9c #d8ffff;
}

/* Notes over the windows */
.arrow {
  position: absolute;
  left: 0;
  top: 0;
  pointer-events: none;
  filter: drop-shadow(2px 3px 2px rgba(0,0,0,0.4));
}

.note {
  position: absolute;
  left: 801px;
  top: 355px;
  font: 400 18px/24px "Liberation Mono", "Noto Sans CJK SC", monospace;
  color: #e21ae2;
}
```
